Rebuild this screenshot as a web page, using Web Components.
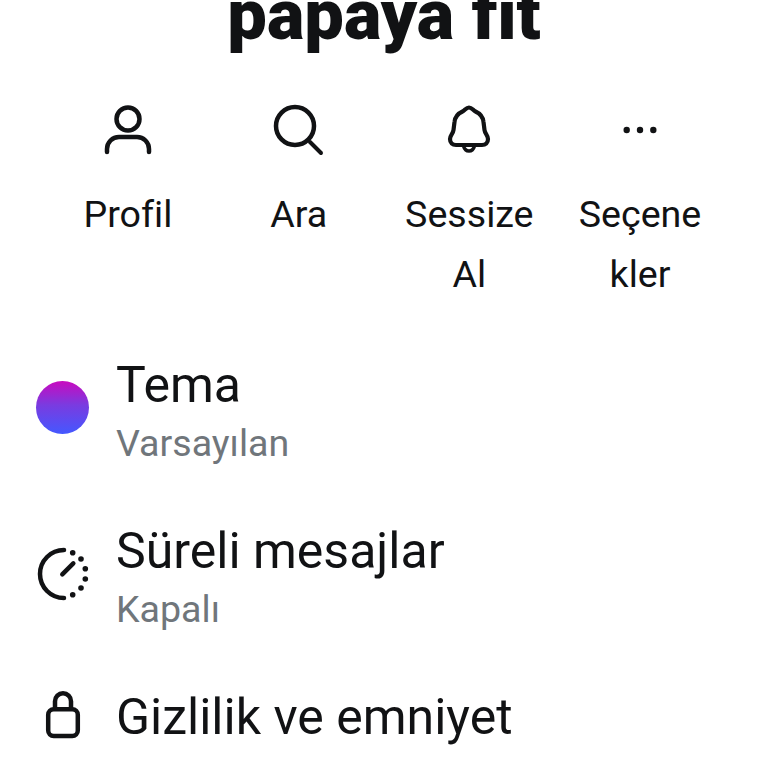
<!DOCTYPE html>
<html lang="tr">
<head>
<meta charset="utf-8">
<title>papaya fit</title>
<style>
  html, body { margin: 0; padding: 0; background: #fff; overflow: hidden; }
  body { font-family: Roboto, "Liberation Sans", sans-serif; color: #111214; width: 768px; height: 768px; }
</style>
</head>
<body>
<chat-screen>
  <chat-title>papaya fit</chat-title>
  <action-bar>
    <action-item label="Profil">
      <svg viewBox="0 0 60 60" width="60" height="60" fill="none" stroke="#111214" stroke-width="4.5" stroke-linecap="round">
        <circle cx="30" cy="19" r="11.5"/>
        <path d="M9 52v-3a12 12 0 0 1 12-12h18a12 12 0 0 1 12 12v3"/>
      </svg>
    </action-item>
    <action-item label="Ara">
      <svg viewBox="0 0 60 60" width="60" height="60" fill="none" stroke="#111214" stroke-width="4.5" stroke-linecap="round">
        <circle cx="26" cy="26" r="19"/>
        <path d="M41 42L52 53" stroke-width="4"/>
      </svg>
    </action-item>
    <action-item label="Sessize Al">
      <svg viewBox="0 0 60 60" width="60" height="60" fill="none" stroke="#111214" stroke-width="4.2" stroke-linejoin="round" stroke-linecap="round">
        <path d="M30 7.5c-3 0-4 3-6.500 4C18 14 16 17 15.500 22L14.500 30C14 34 11 35 11 39C11 43 13.500 45 17 45H43C46.500 45 49 43 49 39C49 35 46 34 45.500 30L44.500 22C44 17 42 14 36.500 11.500C34 10.500 33 7.500 30 7.500Z"/>
        <path d="M24.500 46c1 3.500 3 5 5.500 5s4.500-1.500 5.500-5" stroke-width="3.500"/>
      </svg>
    </action-item>
    <action-item label="Seçenekler">
      <svg viewBox="0 0 60 60" width="60" height="60" fill="#111214">
        <circle cx="16.700" cy="30" r="3.200"/>
        <circle cx="30" cy="30" r="3.200"/>
        <circle cx="43.300" cy="30" r="3.200"/>
      </svg>
    </action-item>
  </action-bar>
  <settings-row title-text="Tema" sub="Varsayılan" icon-top="24">
    <theme-dot></theme-dot>
  </settings-row>
  <settings-row title-text="Süreli mesajlar" sub="Kapalı" icon-top="24">
    <svg viewBox="0 0 54 54" width="54" height="54" fill="none" stroke="#111214" stroke-width="4.500" stroke-linecap="round">
      <path d="M28 3A24 24 0 0 0 28 51"/>
      <path d="M26.300 27.300L37.300 16.300"/>
      <g fill="#111214" stroke="none">
        <circle cx="36.700" cy="5.700" r="2.800"/>
        <circle cx="45" cy="12" r="2.800"/>
        <circle cx="49.300" cy="21.700" r="2.800"/>
        <circle cx="49.300" cy="32" r="2.800"/>
        <circle cx="45" cy="41" r="2.800"/>
        <circle cx="36.700" cy="47.700" r="2.800"/>
      </g>
    </svg>
  </settings-row>
  <settings-row title-text="Gizlilik ve emniyet" icon-top="0">
    <svg viewBox="0 0 54 54" width="54" height="54" fill="none" stroke="#111214" stroke-width="4.500">
      <rect x="12.200" y="20.200" width="29.600" height="26.800" rx="5.500"/>
      <path d="M19 20.200V12.200a8 8 0 0 1 16 0V20.200"/>
    </svg>
  </settings-row>
</chat-screen>

<script>
class ChatScreen extends HTMLElement {
  constructor() {
    super();
    this.attachShadow({ mode: "open" });
  }
  connectedCallback() {
    this.shadowRoot.innerHTML = `
      <style>
        :host { display: flex; flex-direction: column; width: 768px; height: 768px; overflow: hidden; }
      </style>
      <slot></slot>
    `;
  }
}

class ChatTitle extends HTMLElement {
  constructor() {
    super();
    this.attachShadow({ mode: "open" });
  }
  connectedCallback() {
    this.shadowRoot.innerHTML = `
      <style>
        :host {
          display: block;
          height: 60px;
          margin-top: -27px;
          text-align: center;
          font-size: 70.400px;
          line-height: 84px;
          font-weight: 900;
          flex: none;
        }
      </style>
      <slot></slot>
    `;
  }
}

class ActionBar extends HTMLElement {
  constructor() {
    super();
    this.attachShadow({ mode: "open" });
  }
  connectedCallback() {
    this.shadowRoot.innerHTML = `
      <style>
        :host {
          display: grid;
          grid-template-columns: repeat(4, 170.700px);
          justify-content: center;
          padding-top: 67px;
          height: 257px;
          box-sizing: content-box;
          flex: none;
        }
      </style>
      <slot></slot>
    `;
  }
}

class ActionItem extends HTMLElement {
  constructor() {
    super();
    this.attachShadow({ mode: "open" });
  }
  connectedCallback() {
    this.shadowRoot.innerHTML = `
      <style>
        :host { display: flex; flex-direction: column; align-items: center; }
        .icon { height: 60px; width: 60px; }
        .label {
          width: 132px;
          margin-top: 24px;
          text-align: center;
          font-size: 37.600px;
          line-height: 60px;
          overflow-wrap: anywhere;
        }
      </style>
      <div class="icon"><slot></slot></div>
      <div class="label">${this.getAttribute("label")}</div>
    `;
  }
}

class SettingsRow extends HTMLElement {
  constructor() {
    super();
    this.attachShadow({ mode: "open" });
  }
  connectedCallback() {
    const sub = this.getAttribute("sub");
    this.shadowRoot.innerHTML = `
      <style>
        :host {
          display: flex;
          align-items: flex-start;
          gap: 26px;
          padding: 0 36px;
          height: 166px;
          flex: none;
        }
        .icon { width: 54px; height: 54px; flex: none; margin-top: ${this.getAttribute("icon-top")}px; }
        .title { font-size: 50px; line-height: 56px; }
        .sub { font-size: 37.600px; line-height: 60px; color: #70767b; }
      </style>
      <div class="icon"><slot></slot></div>
      <div>
        <div class="title">${this.getAttribute("title-text")}</div>
        ${sub ? `<div class="sub">${sub}</div>` : ""}
      </div>
    `;
  }
}

class ThemeDot extends HTMLElement {
  constructor() {
    super();
    this.attachShadow({ mode: "open" });
  }
  connectedCallback() {
    this.shadowRoot.innerHTML = `
      <style>
        :host {
          display: block;
          width: 53px;
          height: 53px;
          border-radius: 50%;
          background: linear-gradient(180deg, #c90abf 0%, #7a3be0 45%, #4458ff 100%);
        }
      </style>
    `;
  }
}

customElements.define("chat-screen", ChatScreen);
customElements.define("chat-title", ChatTitle);
customElements.define("action-bar", ActionBar);
customElements.define("action-item", ActionItem);
customElements.define("settings-row", SettingsRow);
customElements.define("theme-dot", ThemeDot);
</script>
</body>
</html>
